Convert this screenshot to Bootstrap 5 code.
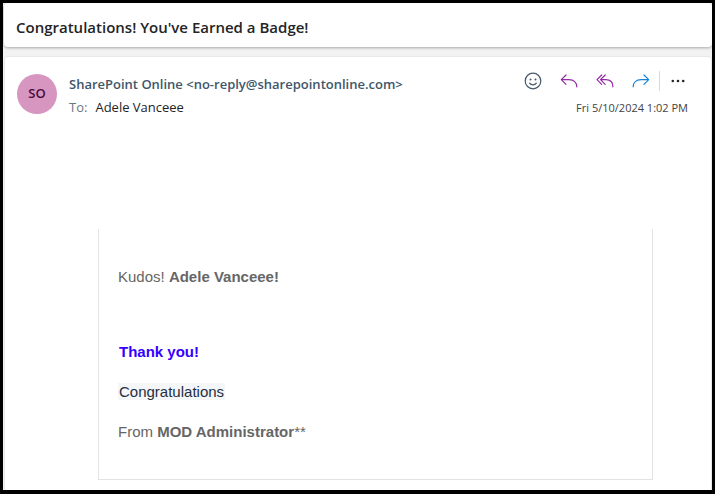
<!DOCTYPE html>
<html lang="en">
<head>
<meta charset="utf-8">
<meta name="viewport" content="width=device-width, initial-scale=1">
<title>Congratulations! You've Earned a Badge!</title>
<link href="https://cdn.jsdelivr.net/npm/bootstrap@5.3.0/dist/css/bootstrap.min.css" rel="stylesheet">
<style>
body { font-family: "Open Sans", "Noto Sans", sans-serif; background: #fff; padding: 0 1px 0 0; }
.reader { min-height: 100vh; border: 3px solid #000; border-bottom-width: 4px; background: #f2f2f2; }
.subject { border-radius: 4px; background: #fff; margin-left: 1px; padding: 14px 12px 10px; box-shadow: 0 1px 3px rgba(0,0,0,.3); }
.subject h1 { font-size: 15px; line-height: 20px; font-weight: 600; color: #242424; }
.message { background: #fff; margin: 9px 0 0 1px; border: 1px solid #e8e8e8; border-bottom: 0; border-radius: 4px 4px 0 0; }
.message-head { padding: 12px 16px 0 12px; gap: 12px; }
.avatar { width: 40px; height: 40px; margin-top: 5px; background: #d696c0; color: #4a0b3b; font-size: 13px; font-weight: 600; }
.sender { font-size: 13px; line-height: 24px; color: #40566b; font-weight: 600; margin-top: 3px; }
.meta { font-size: 13px; line-height: 22px; color: #242424; }
.stamp { color: #424242; font-size: 11px; line-height: 22px; margin-right: 7px; margin-top: 4px; }
.tool { width: 36px; height: 24px; padding: 0; border: 0; background: none; line-height: 0; }
.tool svg { width: 20px; height: 20px; fill: none; stroke-width: 1.2; stroke-linecap: round; stroke-linejoin: round; }
.tools { margin-right: -1px; }
.rule { width: 1px; height: 20px; background: #d8d8d8; }
.mail-body { padding: 110px 58px 10px 93px; }
.kudos { border: 1px solid #e3e3e3; border-top: 0; padding: 38px 19px 37px; font-family: "Liberation Sans", Arial, sans-serif; font-size: 15px; line-height: 20px; color: #666; }
.kudos p { margin: 0 0 20px; }
.kudos .greeting { margin-bottom: 55px; }
.kudos .thanks { color: #3300ff; padding-left: 1px; }
.praise { background: #f5f6f8; color: #242f3e; padding: 0 1px; }
</style>
<script src="https://cdn.jsdelivr.net/npm/bootstrap@5.3.0/dist/js/bootstrap.bundle.min.js"></script>
</head>
<body>
<div class="reader d-flex flex-column">
  <header class="subject"><h1 class="m-0">Congratulations! You've Earned a Badge!</h1></header>
  <main class="message flex-grow-1">
    <div class="message-head d-flex">
      <div class="avatar rounded-circle d-flex align-items-center justify-content-center flex-shrink-0">SO</div>
      <div class="flex-grow-1">
        <div class="sender">SharePoint Online &lt;no-reply@sharepointonline.com&gt;</div>
        <div class="meta"><span class="text-secondary me-2">To:</span>Adele Vanceee</div>
      </div>
      <div class="d-flex flex-column align-items-end flex-shrink-0">
        <div class="tools d-flex align-items-center">
          <button type="button" class="tool" aria-label="React"><svg viewBox="0 0 20 20" stroke="#44586b"><circle cx="10" cy="10" r="7.8"/><path d="M6.6 12.2c1.6 2.3 5.2 2.3 6.8 0"/><g fill="#44586b" stroke="none"><circle cx="7.5" cy="8.4" r="1"/><circle cx="12.5" cy="8.4" r="1"/></g></svg></button>
          <button type="button" class="tool" aria-label="Reply"><svg viewBox="0 0 20 20" stroke="#932ba5"><path d="M7 4 2.3 8.7 7 13.4M2.5 8.7h7.5c4.8 0 7.8 2.8 7.8 7.1"/></svg></button>
          <button type="button" class="tool" aria-label="Reply all"><svg viewBox="0 0 20 20" stroke="#932ba5"><path d="M6.7 4 2 8.7l4.7 4.7M10.2 4 5.5 8.7l4.7 4.7M5.7 8.7h5.1c4.5 0 7.1 2.8 7.1 7.1"/></svg></button>
          <button type="button" class="tool" aria-label="Forward"><svg viewBox="0 0 20 20" stroke="#1683d8"><path d="m13 4 4.7 4.7-4.7 4.7M17.5 8.7H10c-4.8 0-7.8 2.8-7.8 7.1"/></svg></button>
          <span class="rule"></span>
          <button type="button" class="tool" aria-label="More actions"><svg viewBox="0 0 20 20"><g fill="#242424"><circle cx="4.8" cy="10" r="1.3"/><circle cx="10" cy="10" r="1.3"/><circle cx="15.2" cy="10" r="1.3"/></g></svg></button>
        </div>
        <time class="stamp" datetime="2024-05-10T13:02">Fri 5/10/2024 1:02 PM</time>
      </div>
    </div>
    <div class="mail-body">
      <div class="kudos">
        <p class="greeting">Kudos! <strong>Adele Vanceee!</strong></p>
        <p class="thanks"><strong>Thank you!</strong></p>
        <p><span class="praise">Congratulations</span></p>
        <p class="mb-0">From <strong>MOD Administrator</strong>**</p>
      </div>
    </div>
  </main>
</div>
</body>
</html>
